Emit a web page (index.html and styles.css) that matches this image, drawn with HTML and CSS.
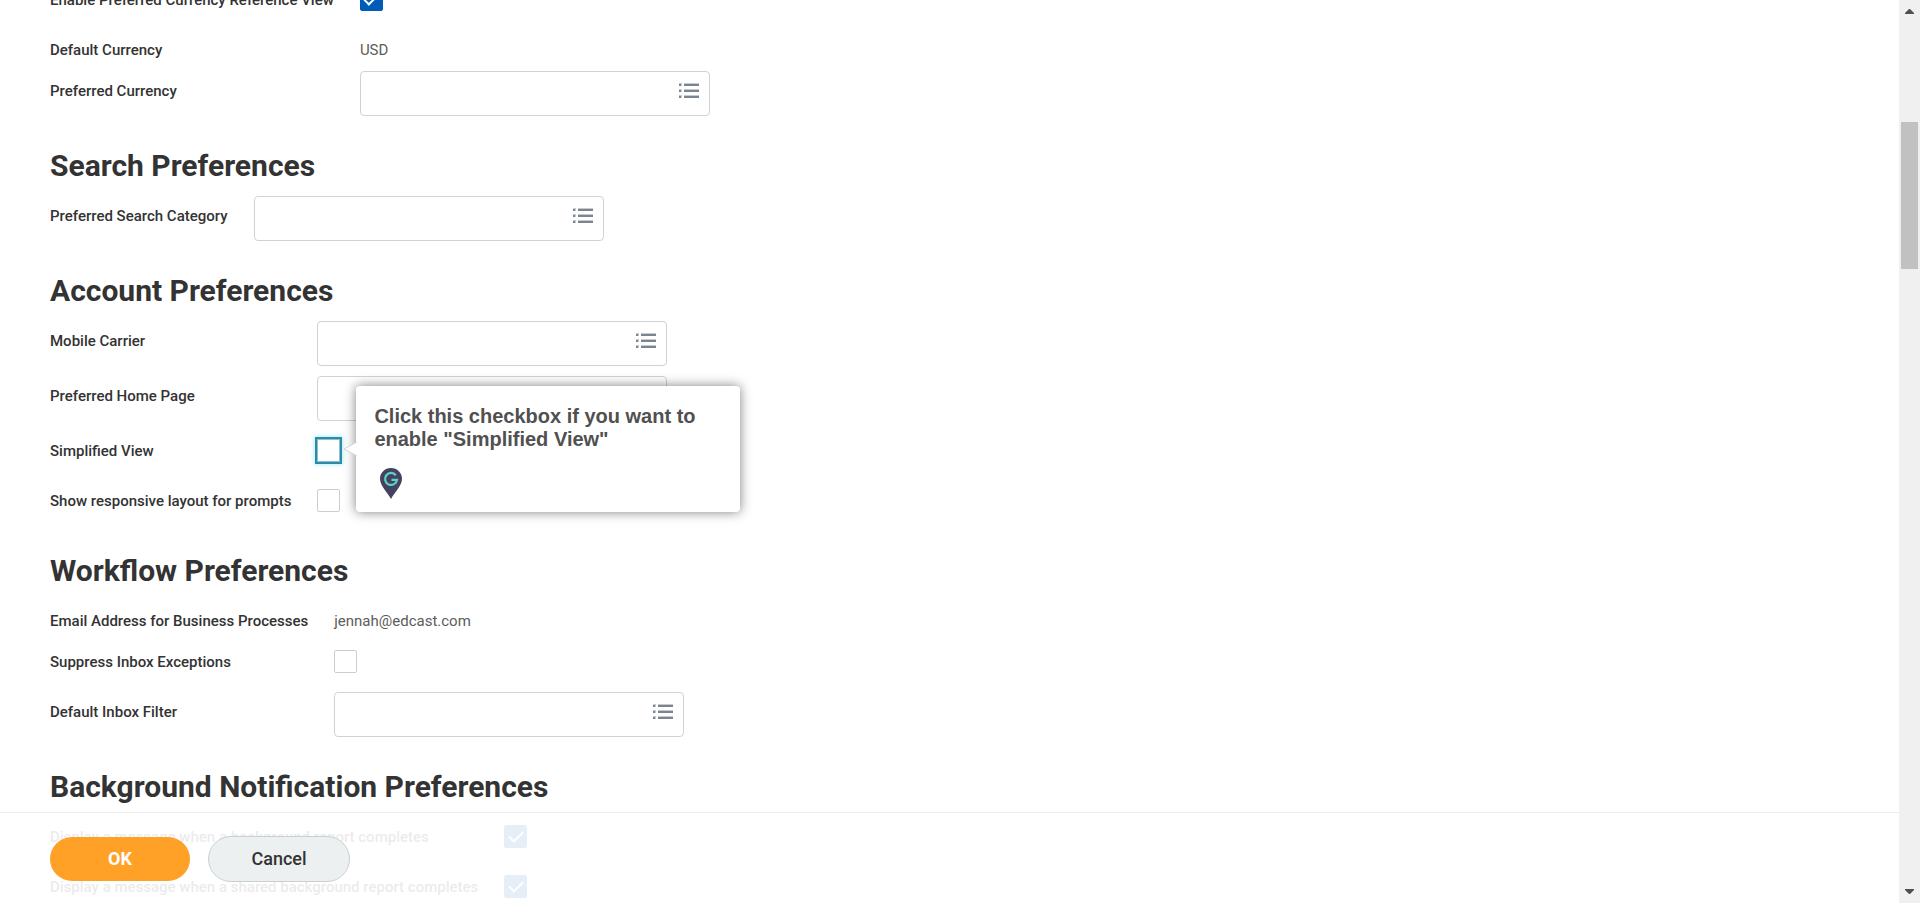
FILE: index.html
```html
<!DOCTYPE html>
<html lang="en">
<head>
<meta charset="utf-8">
<title>Change Preferences</title>
<link rel="stylesheet" href="styles.css">
</head>
<body>
<svg class="defs" aria-hidden="true">
  <symbol id="list" viewBox="0 0 20 16">
    <path d="M0 0h3v3H0zM0 6h3v3H0zM0 12h3v3H0zM5 0h15v3H5zM5 6h15v3H5zM5 12h15v3H5z" fill="#c5cbd1"/>
    <path d="M0 1h2v2H0zM0 7h2v2H0zM0 13h2v2H0zM5 1h15v2H5zM5 7h15v2H5zM5 13h15v2H5z" fill="#7b858f"/>
  </symbol>
</svg>
<div class="app">
  <main class="page">
    <form class="form">
      <section class="group">
        <div class="fields">
          <label class="name" for="enable-currency">Enable Preferred Currency Reference View</label>
          <div class="value value-check"><input class="check" type="checkbox" id="enable-currency" checked></div>
          <span class="name">Default Currency</span>
          <div class="value value-text">USD</div>
          <label class="name" for="currency">Preferred Currency</label>
          <div class="value value-prompt"><input class="text" type="text" id="currency"><button class="prompt" type="button" aria-label="Currency options"><svg class="list-icon"><use href="#list"/></svg></button></div>
        </div>
      </section>
      <section class="group">
        <h2 class="title">Search Preferences</h2>
        <div class="fields">
          <label class="name" for="category">Preferred Search Category</label>
          <div class="value value-prompt"><input class="text" type="text" id="category"><button class="prompt" type="button" aria-label="Category options"><svg class="list-icon"><use href="#list"/></svg></button></div>
        </div>
      </section>
      <section class="group">
        <h2 class="title">Account Preferences</h2>
        <div class="fields">
          <label class="name" for="carrier">Mobile Carrier</label>
          <div class="value value-prompt"><input class="text" type="text" id="carrier"><button class="prompt" type="button" aria-label="Carrier options"><svg class="list-icon"><use href="#list"/></svg></button></div>
          <label class="name" for="home">Preferred Home Page</label>
          <div class="value value-prompt"><input class="text" type="text" id="home"><button class="prompt" type="button" aria-label="Home page options"><svg class="list-icon"><use href="#list"/></svg></button></div>
          <label class="name" for="simplified">Simplified View</label>
          <div class="value value-check">
            <input class="check check-guided" type="checkbox" id="simplified">
            <div class="callout" role="tooltip">
              <svg class="callout-arrow" viewBox="0 0 14 14" aria-hidden="true"><path d="M14 0 1 7l13 7z" fill="#fff"/><path d="M14 0 1 7l13 7" fill="none" stroke="#d4d4d4"/></svg>
              <p class="callout-text">Click this checkbox if you want to enable "Simplified View"</p>
              <svg class="pin" viewBox="0 0 22 31" aria-hidden="true">
                <path d="M11 0C4.800 0 0 4.800 0 10.800 0 17.500 7 24 11 31c4-7 11-13.500 11-20.200C22 4.800 17.200 0 11 0z" fill="#424360"/>
                <path d="M15.800 7.200A6 6 0 1 0 17 11.800H11.500" fill="none" stroke="#5fd0c3" stroke-width="2.200"/>
              </svg>
            </div>
          </div>
          <label class="name" for="responsive">Show responsive layout for prompts</label>
          <div class="value value-check"><input class="check" type="checkbox" id="responsive"></div>
        </div>
      </section>
      <section class="group">
        <h2 class="title">Workflow Preferences</h2>
        <div class="fields">
          <span class="name">Email Address for Business Processes</span>
          <div class="value value-text">jennah@edcast.com</div>
          <label class="name" for="suppress">Suppress Inbox Exceptions</label>
          <div class="value value-check"><input class="check" type="checkbox" id="suppress"></div>
          <label class="name" for="filter">Default Inbox Filter</label>
          <div class="value value-prompt"><input class="text" type="text" id="filter"><button class="prompt" type="button" aria-label="Filter options"><svg class="list-icon"><use href="#list"/></svg></button></div>
        </div>
      </section>
      <section class="group">
        <h2 class="title">Background Notification Preferences</h2>
        <div class="fields">
          <label class="name" for="background">Display a message when a background report completes</label>
          <div class="value value-check"><input class="check" type="checkbox" id="background" checked></div>
          <label class="name" for="shared">Display a message when a shared background report completes</label>
          <div class="value value-check"><input class="check" type="checkbox" id="shared" checked></div>
        </div>
      </section>
    </form>
    <footer class="actions">
      <button class="button button-ok" type="button">OK</button>
      <button class="button button-cancel" type="button">Cancel</button>
    </footer>
  </main>
  <div class="scrollbar" aria-hidden="true">
    <svg class="arrow" viewBox="0 0 9 5"><path d="M4 0h1l4 4v1H0V4z" fill="#505050"/></svg>
    <div class="track"><div class="thumb"></div></div>
    <svg class="arrow" viewBox="0 0 9 5"><path d="M0 0h9v1L5 5H4L0 1z" fill="#505050"/></svg>
  </div>
</div>
</body>
</html>
```
FILE: styles.css
```css
* { box-sizing: border-box; }

body {
  margin: 0;
  font-family: Roboto, "Liberation Sans", sans-serif;
  font-size: 15px;
  color: #333;
  background: #fff;
}

.defs { position: absolute; width: 0; height: 0; }

.app { display: flex; height: 100vh; overflow: hidden; }

.page { position: relative; flex: 1; overflow: hidden; }

/* The form is scrolled half a row past its first field. */
.form { margin-top: -25px; padding: 0 50px; }

.title {
  margin: 0;
  padding: 27px 0 7px;
  font-size: 30px;
  line-height: 36px;
  font-weight: 700;
}

.fields {
  display: grid;
  grid-template-columns: max-content 350px;
  column-gap: 26px;
}

.name { padding-top: 15px; line-height: 20px; font-weight: 500; }

.value { position: relative; }
.value-text { height: 41px; padding-top: 15px; line-height: 20px; color: #5c5c5c; }
.value-check { height: 50px; padding-top: 13px; }
.value-prompt { height: 55px; padding-top: 5px; }

.text {
  display: block;
  width: 100%;
  height: 45px;
  padding: 0 44px 0 12px;
  border: 1px solid #ced3d5;
  border-radius: 4px;
  background: #fff;
  font: inherit;
}

.prompt {
  position: absolute;
  top: 9px;
  right: 6px;
  display: grid;
  place-items: center;
  width: 30px;
  height: 32px;
  padding: 0;
  border: 0;
  background: none;
}

.list-icon { width: 20px; height: 16px; }

.check {
  appearance: none;
  display: grid;
  place-items: center;
  width: 23px;
  height: 23px;
  margin: 0;
  border: 1px solid #c8ced1;
  border-radius: 2px;
  background: #fff;
}

.check:checked { border-color: #005cb9; background: #005cb9; }

.check:checked::after {
  content: "";
  width: 12px;
  height: 6px;
  margin-bottom: 3px;
  border: solid #fff;
  border-width: 0 0 2px 2px;
  transform: rotate(-45deg);
}

.check-guided {
  outline: 2px solid #2b8ba9;
  border-color: #8cc0cf;
  border-radius: 0;
  box-shadow: 0 0 4px 3px #b8f0f8;
}

.callout {
  position: absolute;
  z-index: 1;
  top: -40px;
  left: 39px;
  width: 384px;
  padding: 19px 18px 13px;
  border-radius: 4px;
  background: #fff;
  box-shadow: 0 0 12px rgba(0, 0, 0, 0.5);
}

.callout-arrow { position: absolute; top: 56px; left: -13px; width: 14px; height: 14px; }

.callout-text {
  margin: 0 0 17px;
  font: bold 20px/23px "Liberation Sans", Arial, sans-serif;
  color: #505050;
}

.pin { display: block; width: 22px; height: 31px; margin-left: 6px; }

.actions {
  position: absolute;
  z-index: 2;
  left: 0;
  right: 0;
  bottom: 0;
  display: flex;
  align-items: center;
  gap: 18px;
  padding: 23px 50px 21px;
  border-top: 1px solid #eceeee;
  background: rgba(255, 255, 255, 0.9);
}

.button {
  border: 1px solid #c8d0d4;
  border-radius: 23px;
  font: 500 18px/20px Roboto, sans-serif;
  color: #333;
}

.button-ok { width: 140px; height: 44px; border: 0; background: #ffa126; color: #fff; font-weight: 700; }
.button-cancel { width: 142px; height: 46px; background: #ecf0f1; }

.scrollbar {
  display: flex;
  flex-direction: column;
  align-items: center;
  width: 21px;
  padding: 9px 0;
  background: #f0f0f0;
}

.arrow { width: 9px; height: 5px; }
.track { flex: 1; padding-top: 108px; }
.thumb { width: 17px; height: 147px; background: #c1c1c1; }
```
